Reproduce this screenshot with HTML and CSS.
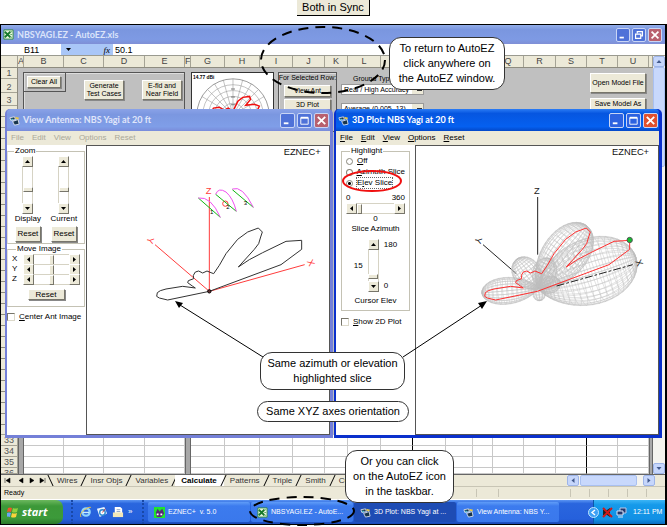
FILE: index.html
```html
<!DOCTYPE html>
<html lang="en">
<head>
<meta charset="utf-8">
<title>Both in Sync</title>
<link rel="stylesheet" href="styles.css">
</head>
<body>
<svg class="defs" aria-hidden="true">
  <symbol id="app" viewBox="0 0 12 12"><path d="M1 3l5-1 1 3-5 1z" fill="#18354d" stroke="#fff" stroke-width=".8"/><path d="M2 4l2 0 1 1-2 1z" fill="#5bc8d8"/><path d="M4 7l6-2 1 5-5 1z" fill="#18354d" stroke="#fff" stroke-width=".8"/><path d="M7 2l4 1-1 2-3-1z" fill="#e8c84a"/></symbol>
  <symbol id="xls" viewBox="0 0 12 12"><path d="M1 1h10v10H1z" fill="#e8f5e0" stroke="#2f8a3c" stroke-width="1"/><path d="M2 3l6 6M8 3L2 9" stroke="#16792b" stroke-width="2"/><path d="M8 3h2M8 6h2M8 9h2" stroke="#5aa85e"/></symbol>
  <symbol id="min" viewBox="0 0 14 14"><path d="M3 10h5" stroke="#fff" stroke-width="2"/></symbol>
  <symbol id="max" viewBox="0 0 14 14"><path d="M3 4h8v7H3z" fill="none" stroke="#fff"/><path d="M3 4h8" stroke="#fff" stroke-width="2"/></symbol>
  <symbol id="restore" viewBox="0 0 14 14"><path d="M5 5V3h6v5H9M3 6h6v5H3z" fill="none" stroke="#fff" stroke-width="1.4"/></symbol>
  <symbol id="close" viewBox="0 0 14 14"><path d="M3 3l8 8M11 3l-8 8" stroke="#fff" stroke-width="2"/></symbol>
  <symbol id="up" viewBox="0 0 9 9"><path d="M2 6h5L4.500 3z"/></symbol>
  <symbol id="down" viewBox="0 0 9 9"><path d="M2 3h5L4.500 6z"/></symbol>
  <symbol id="left" viewBox="0 0 9 9"><path d="M6 2v5L3 4.500z"/></symbol>
  <symbol id="right" viewBox="0 0 9 9"><path d="M3 2v5l3-2.500z"/></symbol>
  <symbol id="pattern" viewBox="-132 112 735 870"><path d="M235 548L110 574 85 568 77 563 79 552 88 546 105 541 155 533 193 538 184 532 170 522 172 516 188 510 187 500 193 490 203 487 215 493 228 487 240 492 248 495 265 470 285 435 320 392 350 370 382 358 394 370 389 385 383 405 370 422 322 475 355 453 395 432 465 398 512 395 512 422 450 468z"/></symbol>
</svg>

<h1 class="caption">Both in Sync</h1>

<main class="desktop">
  <section class="excel">
    <header class="excel-title">
      <svg class="ic"><use href="#xls"/></svg><span class="title-text">NBSYAGI.EZ - AutoEZ.xls</span>
      <div class="win-buttons">
        <button aria-label="Minimize"><svg><use href="#min"/></svg></button>
        <button aria-label="Restore"><svg><use href="#restore"/></svg></button>
        <button class="x" aria-label="Close"><svg><use href="#close"/></svg></button>
      </div>
    </header>
    <div class="formula">
      <input class="cell-name" aria-label="Name box" value="B11">
      <span class="fx"><svg class="tri"><use href="#down"/></svg><i>fx</i></span>
      <input class="cell-value" aria-label="Formula" value="50.1">
    </div>
    <div class="sheet">
      <div class="sheet-main">
        <div class="cols head"><span></span><span>A</span><span>B</span><span>C</span><span>D</span><span>E</span><span>F</span><span>G</span><span>H</span><span>I</span><span>J</span><span>K</span><span>L</span><span></span><span></span><span></span><span></span><span>Q</span><span>R</span><span>S</span><span>T</span><span>U</span><span></span></div>
        <div class="band">
          <div class="row-nums"><span class="r1">1</span><span class="r2">2</span><span class="r3">3</span><span class="rest"></span></div>
          <div class="panel">
            <div class="frame tests">
              <div class="clear"><button class="gray">Clear All</button></div>
              <button class="gray tall">Generate<br>Test Cases</button>
              <button class="gray tall">E-fld and<br>Near Field</button>
            </div>
            <div class="chart">
              <svg viewBox="0 0 83 90"><text x="1" y="6" class="dbi">14.77 dBi</text>
                <g fill="none" stroke="#999" stroke-width=".6"><circle cx="42" cy="43" r="37" stroke="#555"/><circle cx="42" cy="43" r="31"/><circle cx="42" cy="43" r="25"/><circle cx="42" cy="43" r="19"/><circle cx="42" cy="43" r="12"/><path d="M42 6v74M5 43h74M23 11l38 64M61 11L23 75M10 24l64 38M74 24L10 62M32 7l20 72M52 7L32 79M16 17l52 52M68 17L16 69"/></g>
                <g fill="#777"><path d="M40 16h4v1h-4zM40 24h4v1h-4zM40 32h4v1h-4z"/></g>
                <path d="M18 43l4-7 6-1 5 3 4-2 5 3 5-10 5-4 7-1 1 3-5 6 9-1 5 2-3 6-14 5" fill="none" stroke="#f01010" stroke-width="1.500"/>
              </svg>
            </div>
            <div class="frame selected"><span>For Selected Row:</span><button class="gray">View Ant</button><button class="gray">3D Plot</button></div>
            <div class="ground"><label for="gt">Ground Type</label><select id="gt"><option>Real / High Accuracy</option></select><select aria-label="Ground constants"><option>Average (0.005, 13)</option></select></div>
            <div class="files"><button class="gray tall">Open Model File</button><button class="gray">Save Model As</button></div>
          </div>
        </div>
        <div class="cols row"><span>33</span><span></span><span></span><span></span><span></span><span></span><span></span><span></span><span></span><span></span><span></span><span></span><span></span><span></span><span></span><span></span><span></span><span></span><span></span><span></span><span></span><span></span><span></span></div>
        <div class="cols row"><span>34</span><span></span><span></span><span></span><span></span><span></span><span></span><span></span><span></span><span></span><span></span><span></span><span></span><span></span><span></span><span></span><span></span><span></span><span></span><span></span><span></span><span></span><span></span></div>
        <div class="cols row"><span>35</span><span></span><span></span><span></span><span></span><span></span><span></span><span></span><span></span><span></span><span></span><span></span><span></span><span></span><span></span><span></span><span></span><span></span><span></span><span></span><span></span><span></span><span></span></div>
        <div class="cols row last"><span>36</span><span></span><span></span><span></span><span></span><span></span><span></span><span></span><span></span><span></span><span></span><span></span><span></span><span></span><span></span><span></span><span></span><span></span><span></span><span></span><span></span><span></span><span></span></div>
      </div>
      <div class="xp-scroll"><button aria-label="Scroll up"><svg><use href="#up"/></svg></button><div class="xp-thumb"></div><button aria-label="Scroll down"><svg><use href="#down"/></svg></button></div>
    </div>
    <nav class="tabs">
      <div class="tab-nav"><svg viewBox="0 0 42 9"><path d="M2 2v5M7 2v5L3 4.500zM20 2v5l-4-2.500zM27 2v5l4-2.500zM37 2v5l4-2.500zM42 2v5" stroke="#000" stroke-width=".5"/></svg></div>
      <a class="first" href="#">Wires</a><a href="#">Insr Objs</a><a href="#">Variables</a><a class="on" href="#">Calculate</a><a href="#">Patterns</a><a href="#">Triple</a><a href="#">Smith</a><a href="#">Cu</a>
      <div class="xp-scroll h"><button aria-label="Scroll left"><svg><use href="#left"/></svg></button><div class="xp-thumb"></div><button aria-label="Scroll right"><svg><use href="#right"/></svg></button></div>
    </nav>
    <footer class="status"><span class="ready">Ready</span><i class="w"></i><i class="ww"></i><i></i><i></i><i></i><i></i><i></i></footer>
  </section>

  <section class="window view">
    <header class="win-title"><svg class="ic"><use href="#app"/></svg><span class="title-text">View Antenna: NBS Yagi at 20 ft</span>
      <div class="win-buttons">
        <button aria-label="Minimize"><svg><use href="#min"/></svg></button>
        <button aria-label="Maximize"><svg><use href="#max"/></svg></button>
        <button class="x" aria-label="Close"><svg><use href="#close"/></svg></button>
      </div>
    </header>
    <nav class="menu"><a href="#">File</a><a href="#">Edit</a><a href="#">View</a><a href="#">Options</a><a href="#">Reset</a></nav>
    <div class="win-body">
      <div class="side">
        <fieldset class="zoom"><legend>Zoom</legend>
          <div class="col"><div class="scroll v"><button aria-label="Increase display"><svg><use href="#up"/></svg></button><input type="range" id="display" value="34"><button aria-label="Decrease display"><svg><use href="#down"/></svg></button></div><label for="display">Display</label><button class="gray">Reset</button></div>
          <div class="col"><div class="scroll v"><button aria-label="Increase current"><svg><use href="#up"/></svg></button><input type="range" id="current" value="34"><button aria-label="Decrease current"><svg><use href="#down"/></svg></button></div><label for="current">Current</label><button class="gray">Reset</button></div>
        </fieldset>
        <fieldset class="move"><legend>Move Image</legend>
          <div class="axis"><label for="mx">X</label><div class="scroll"><button aria-label="X down"><svg><use href="#left"/></svg></button><input type="range" id="mx"><button aria-label="X up"><svg><use href="#right"/></svg></button></div></div>
          <div class="axis"><label for="my">Y</label><div class="scroll"><button aria-label="Y down"><svg><use href="#left"/></svg></button><input type="range" id="my"><button aria-label="Y up"><svg><use href="#right"/></svg></button></div></div>
          <div class="axis"><label for="mz">Z</label><div class="scroll"><button aria-label="Z down"><svg><use href="#left"/></svg></button><input type="range" id="mz"><button aria-label="Z up"><svg><use href="#right"/></svg></button></div></div>
          <button class="gray">Reset</button>
        </fieldset>
        <label class="check"><input type="checkbox"><span><u>C</u>enter Ant Image</span></label>
      </div>
      <div class="canvas">
        <svg viewBox="-132 112 735 870" preserveAspectRatio="xMinYMin meet" fill="none" stroke-width="3">
          <text x="458" y="140" class="brand">EZNEC+</text>
          <g stroke="#ff3c3c"><path d="M235 265V548L72 408M235 548L521 468"/><circle cx="283" cy="285" r="8"/></g>
          <g class="axis-label red"><text x="224" y="256">Z</text><text x="-9" y="9" transform="translate(57 395) rotate(105)">Y</text><text x="-9" y="9" transform="translate(539 462) rotate(65)">X</text></g>
          <g stroke="#10b810"><path d="M202 268l66 58M254 257l62 51M304 243l63 53"/></g>
          <g stroke="#f050f0"><path d="M202 268Q240 262 268 326M254 257Q262 235 285 250 306 268 316 308M304 241Q334 229 367 296"/></g>
          <g class="num"><text x="237" y="316">1</text><text x="286" y="302">2</text><text x="338" y="290">3</text></g>
          <use href="#pattern" x="-132" y="112" width="735" height="870" stroke="#333"/>
          <circle cx="235" cy="548" r="5" stroke="#000" fill="#633"/>
        </svg>
      </div>
    </div>
  </section>

  <section class="window plot">
    <header class="win-title"><svg class="ic"><use href="#app"/></svg><span class="title-text">3D Plot: NBS Yagi at 20 ft</span>
      <div class="win-buttons">
        <button aria-label="Minimize"><svg><use href="#min"/></svg></button>
        <button aria-label="Maximize"><svg><use href="#max"/></svg></button>
        <button class="x" aria-label="Close"><svg><use href="#close"/></svg></button>
      </div>
    </header>
    <nav class="menu"><a href="#"><u>F</u>ile</a><a href="#"><u>E</u>dit</a><a href="#"><u>V</u>iew</a><a href="#"><u>O</u>ptions</a><a href="#"><u>R</u>eset</a></nav>
    <div class="win-body">
      <div class="side">
        <fieldset class="highlight"><legend>Highlight</legend>
          <label class="radio"><input type="radio" name="hl"><span><u>O</u>ff</span></label>
          <label class="radio"><input type="radio" name="hl"><span><u>A</u>zimuth Slice</span></label>
          <label class="radio focus"><input type="radio" name="hl" checked><span>E<u>l</u>ev Slice</span></label>
          <div class="ends"><span>0</span><span>360</span></div>
          <div class="scroll"><button aria-label="Azimuth down"><svg><use href="#left"/></svg></button><input type="range" id="az" value="0"><button aria-label="Azimuth up"><svg><use href="#right"/></svg></button></div>
          <output for="az">0</output>
          <label for="az" class="name">Slice Azimuth</label>
          <div class="elev"><output for="el">15</output><div class="scroll v"><button aria-label="Elevation up"><svg><use href="#up"/></svg></button><input type="range" id="el" value="8"><button aria-label="Elevation down"><svg><use href="#down"/></svg></button></div><div class="limits"><span>180</span><span>0</span></div></div>
          <label for="el" class="name">Cursor Elev</label>
        </fieldset>
        <label class="check"><input type="checkbox"><span><u>S</u>how 2D Plot</span></label>
      </div>
      <div class="canvas">
        <svg viewBox="-132 112 735 870" preserveAspectRatio="xMinYMin meet" fill="none" stroke-width="3">
          <text x="456" y="140" class="brand">EZNEC+</text>
          <path d="M233 265V438M69 408l100 87" stroke="#222"/>
          <g id="mesh"></g>
          <path d="M290 532L518 468" stroke="#222" stroke-dasharray="24 6 8 6"/>
          <g class="axis-label"><text x="222" y="256">Z</text><text x="-9" y="9" transform="translate(54 395) rotate(105)">Y</text><text x="-9" y="9" transform="translate(537 462) rotate(65)">X</text></g>
          <use href="#pattern" x="-135" y="112" width="735" height="870" stroke="#ff3030"/>
          <circle cx="509" cy="394" r="8" fill="#10c030" stroke="#555"/>
        </svg>
      </div>
    </div>
  </section>

  <footer class="taskbar">
    <button class="start"><svg viewBox="0 0 12 12"><path d="M1 2q2-1 4 0l-1 4q-2-1-4 0z" fill="#f0562a"/><path d="M6 2q2 1 5 0l-1 4q-3 1-5 0z" fill="#8fd13f"/><path d="M0 7q2-1 4 0l-1 4q-2-1-4 0z" fill="#6aa5f5"/><path d="M5 7q2 1 5 0l-1 4q-3 1-5 0z" fill="#fbd33c"/></svg>start</button>
    <div class="quick">
      <svg viewBox="0 0 13 13"><circle cx="6.500" cy="6.500" r="4" fill="none" stroke="#8fd4ff" stroke-width="2.500"/><path d="M3 7h7" stroke="#c8ecff" stroke-width="1.500"/><path d="M1 12Q-1 8 5 4t7-2" fill="none" stroke="#f5c842"/></svg>
      <svg viewBox="0 0 13 13"><path d="M1 3l8-2 3 7-8 4z" fill="#e8f4ff"/><circle cx="7" cy="7" r="3" fill="#fff" stroke="#2f8ad0" stroke-width="1.500"/><path d="M7 7l3-4" stroke="#c33"/></svg>
      <svg viewBox="0 0 13 13"><path d="M3 1h6l2 2v6H3z" fill="#fff"/><path d="M1 7h11v5H1z" fill="#f2e7b8"/><path d="M5 4h4M5 6h4" stroke="#8aa0c0"/></svg>
      <span>»</span>
    </div>
    <div class="tasks">
      <button><svg class="ic" viewBox="0 0 12 12"><path d="M0 0h12v12H0z" fill="#1ee52c"/><path d="M2 6l2-4 2 3 3-3 2 5-3 4H3z" fill="#5a2a78"/><path d="M3 7h2v2H3zM7 7h2v2H7z" fill="#fff"/></svg>EZNEC+&nbsp; v. 5.0</button>
      <button><svg class="ic"><use href="#xls"/></svg>NBSYAGI.EZ - AutoE...</button>
      <button class="on"><svg class="ic"><use href="#app"/></svg>3D Plot: NBS Yagi at ...</button>
      <button><svg class="ic"><use href="#app"/></svg>View Antenna: NBS Y...</button>
    </div>
    <div class="tray">
      <svg viewBox="0 0 11 11"><circle cx="5.500" cy="5.500" r="5" fill="#3da0f5" stroke="#bfe4ff"/><path d="M7 3L4 5.500 7 8" fill="none" stroke="#fff" stroke-width="1.400"/></svg>
      <svg viewBox="0 0 11 11"><path d="M1 3h4l3-2v9L5 8H1z" fill="#222"/><path d="M1 1l9 9M10 1l-9 9" stroke="#d01818" stroke-width="2"/></svg>
      <svg viewBox="0 0 11 11"><path d="M4 1h6v5H4z" fill="#24386e" stroke="#b8c8e8"/><path d="M1 4h6v4H1z" fill="#24386e" stroke="#dce6f8"/><path d="M2 10h5" stroke="#dce6f8"/></svg>
      <time>12:11 PM</time>
    </div>
  </footer>
</main>

<svg class="marks" viewBox="0 0 667 527" aria-hidden="true">
  <g fill="none" stroke="#000" stroke-width="2" stroke-dasharray="10 7"><ellipse cx="323" cy="60" rx="62" ry="33"/><ellipse cx="302" cy="511" rx="52" ry="14"/></g>
  <ellipse cx="372" cy="181" rx="29" ry="10" fill="none" stroke="#f01010" stroke-width="2"/>
  <path d="M263 357L180 305M403 357L482 305" stroke="#000" fill="none"/>
  <path d="M175 301l8 2-4 5zM487 301l-5 8-4-6z"/>
</svg>
<p class="note n1">To return to AutoEZ<br>click anywhere on<br>the AutoEZ window.</p>
<p class="note n2">Same azimuth or elevation<br>highlighted slice</p>
<p class="note n3">Same XYZ axes orientation</p>
<p class="note n4">Or you can click<br>on the AutoEZ icon<br>in the taskbar.</p>
<script src="script.js"></script>
</body>
</html>
```
FILE: styles.css
```css
* { box-sizing: border-box; }
body {
  margin: 0;
  min-height: 100vh;
  position: relative;
  display: flex;
  flex-direction: column;
  align-items: center;
  background: #fff;
  color: #000;
  font: 8px/10px "Liberation Sans", Arial, sans-serif;
}
button, input, select { font: inherit; color: inherit; margin: 0; padding: 0; border: 0; border-radius: 0; min-width: 0; }
fieldset { margin: 0; padding: 0; min-width: 0; border: 1px solid #c4c2b4; }
legend { margin-left: 4px; padding: 0 1px; }
a { color: inherit; text-decoration: none; }
svg { display: block; }
.defs { position: absolute; width: 0; height: 0; }
.ic { width: 11px; height: 11px; flex: none; }

.caption {
  margin: 0 0 8px;
  height: 16px;
  padding: 0 5px;
  background: #ece9d8;
  border-right: 1px solid #000;
  border-bottom: 1px solid #000;
  font-size: 11px;
  line-height: 15px;
  font-weight: normal;
}
.desktop {
  position: relative;
  align-self: stretch;
  flex: 1;
  display: flex;
  flex-direction: column;
  margin-bottom: 2px;
  border: 1px solid #000;
  border-width: 1px 2px 1px 1px;
}

/* spreadsheet window */
.excel { flex: 1; display: flex; flex-direction: column; }
.excel-title {
  display: flex;
  align-items: center;
  gap: 3px;
  height: 19px;
  padding: 0 3px 0 2px;
  background: linear-gradient(#93aeea, #7a96df 25%, #7e9ae4 75%, #7f8fd6);
  color: #dbe4fa;
}
.title-text { font: bold 9px/12px Lato, sans-serif; white-space: nowrap; }
.win-buttons { display: flex; gap: 2px; margin-left: auto; }
.win-buttons button { width: 14px; height: 14px; border: 1px solid #c9d5f5; border-radius: 2px; background: #4f72d8; }
.win-buttons svg { width: 12px; height: 12px; }
.win-buttons .x { background: #b8606e; }
.formula { display: flex; height: 12px; background: #fff; border-bottom: 1px solid #9a9a90; font-size: 9px; }
.cell-name { width: 60px; padding-left: 23px; background: #fff; }
.fx { display: flex; align-items: center; justify-content: space-between; width: 52px; padding: 0 3px; background: #a9c6f7; font-family: "Liberation Serif", serif; }
.tri { width: 9px; height: 9px; }
.cell-value { flex: 1; padding-left: 2px; background: #fff; }
.sheet { flex: 1; display: flex; min-height: 0; }
.sheet-main { flex: 1; display: flex; flex-direction: column; background: #fff; }
.cols { display: grid; grid-template-columns: 17fr 6fr 40fr 40fr 41fr 40fr 6fr 34fr 35fr 33fr 32fr 23fr 33fr 32fr 33fr 27fr 20fr 31fr 32fr 31fr 31fr 31fr 4fr; }
.cols span { min-width: 0; overflow: hidden; }
.head { height: 12px; background: #ece9d8; border-bottom: 1px solid #8e8c80; font-size: 9px; color: #444; text-align: center; }
.head span { border-right: 1px solid #a5a395; }
.row { height: 11px; }
.row span { border-right: 1px solid #c8c8c8; border-bottom: 1px solid #c8c8c8; }
.row span:first-child { background: #ece9d8; font-size: 9px; color: #555; text-align: center; border-color: #a5a395; }
.row span:nth-child(2), .row span:nth-child(7), .row span:last-child { background: #a8a8a8; border: 1px solid #666; border-width: 0 1px; }
.row span:nth-child(14), .row span:nth-child(20) { border-right-color: #000; }
.last { height: 6px; overflow: hidden; }
.band { flex: 1; display: flex; min-height: 0; }
.row-nums { width: 17px; display: flex; flex-direction: column; background: #ece9d8; border-right: 1px solid #8e8c80; font-size: 9px; color: #555; text-align: center; }
.row-nums span { display: flex; align-items: end; justify-content: center; border-bottom: 1px solid #a5a395; }
.r1 { height: 11px; }
.r2 { height: 14px; }
.r3 { height: 13px; }
.rest { flex: 1; background: repeating-linear-gradient(#ece9d8 0 10px, #8e8c80 10px 11px); }
.panel { flex: 1; display: flex; align-items: flex-start; padding: 4px 7px 0 5px; background: #c0c0c0; }
.frame { border: 1px solid #555; height: 60px; box-shadow: inset 1px 1px #ddd; }
.gray {
  background: #ece9d8;
  border: 1px solid;
  border-color: #fff #77756a #77756a #fff;
  box-shadow: 1px 1px #888;
  line-height: 8px;
  white-space: nowrap;
}
.gray, .panel select { font-size: 7px; }
.tests { display: flex; gap: 18px; width: 162px; }
.tests .tall { margin-top: 7px; width: 40px; height: 20px; }
.clear { width: 42px; height: 19px; padding: 3px; border: 1px solid #555; border-width: 0 1px 1px 0; }
.clear .gray { width: 34px; height: 12px; }
.chart { width: 83px; height: 60px; margin: 0 4px 0 6px; background: #fff; border: 1px solid #333; overflow: hidden; }
.chart svg { width: 100%; }
.dbi { font: bold 5px "Liberation Sans", sans-serif; }
.selected { display: flex; flex-direction: column; align-items: center; gap: 2px; width: 59px; font-size: 7px; white-space: nowrap; }
.selected .gray { width: 47px; height: 12px; }
.ground { display: flex; flex-direction: column; width: 83px; margin: 2px 0 0 4px; font-size: 7px; }
.ground label { margin-left: 12px; }
.ground select { appearance: none; width: 83px; height: 11px; margin-bottom: 8px; padding-left: 2px; border: 1px solid #999; background: conic-gradient(#333 0 0) 75px 4px / 5px 2px no-repeat, linear-gradient(#ece9d8 0 0) right / 11px 100% no-repeat #fff; }
.files { display: flex; flex-direction: column; gap: 5px; margin: 1px 0 0 auto; }
.files .gray { width: 56px; height: 12px; }
.files .tall { height: 20px; }

.xp-scroll { width: 12px; display: flex; flex-direction: column; background: #f4f3ee; }
.xp-scroll button { width: 12px; height: 11px; border: 1px solid #9db4e8; border-radius: 2px; background: #c6d6fb; }
.xp-scroll button svg { width: 10px; height: 9px; fill: #42598c; }
.xp-scroll .xp-thumb { height: 100px; margin-bottom: auto; border: 1px solid #a9c0f0; border-radius: 2px; background: #c8d8fc; }
.xp-scroll.h { flex-direction: row; width: 88px; height: 11px; margin: 0 10px 0 auto; }
.xp-scroll.h .xp-thumb { width: 57px; height: 11px; margin: 0 auto 0 1px; }

.tabs { display: flex; align-items: center; height: 12px; overflow: hidden; background: #ece9d8; border-top: 1px solid #666; }
.tab-nav { width: 46px; padding-left: 2px; }
.tab-nav svg { width: 42px; height: 9px; overflow: visible; }
.tabs a { position: relative; padding: 0 7px 0 6px; line-height: 11px; color: #333; }
.tabs a::after { content: ""; position: absolute; right: 0; top: 0; height: 11px; border-right: 1px solid #000; transform: skewX(-25deg); }
.tabs a.first { margin-left: 4px; }
.tabs a.first::before { content: ""; position: absolute; left: -1px; top: 0; height: 11px; border-left: 1px solid #000; transform: skewX(25deg); }
.tabs a.on { background: #fff; color: #000; font-weight: bold; }
.status { display: flex; height: 14px; align-items: center; background: #ece9d8; border-top: 1px solid #c8c5b5; border-bottom: 1px solid #fff; font-size: 7px; }
.ready { margin: 0 auto 0 3px; }
.status i { width: 19px; height: 8px; border-left: 1px solid #c8c5b5; }
.status .w { width: 22px; }
.status .ww { width: 72px; }

/* tool windows */
.window {
  position: absolute;
  top: 84px;
  bottom: 86px;
  width: 328px;
  display: flex;
  flex-direction: column;
  border: 1px solid;
  border-width: 0 3px 3px 2px;
  border-radius: 5px 5px 0 0;
}
.view { left: 4px; border-color: #7480d8; background: #7480d8; }
.plot { left: 333px; border-color: #0a30cc; background: #0a30cc; }
.win-title { display: flex; align-items: center; gap: 3px; height: 22px; flex: none; padding: 0 1px 0 2px; }
.view .win-title { background: linear-gradient(#8aa2e8, #7b97e0 25%, #7f9ee8 80%, #7a8cda); color: #e0e6fa; border-radius: 4px 4px 0 0; }
.plot .win-title { background: linear-gradient(#2b7cf5, #0656e0 20%, #0560f0 80%, #0348c8); color: #fff; border-radius: 4px 4px 0 0; }
.plot .win-buttons button { background: #2d62e0; }
.plot .win-buttons .x { background: #e0502e; }
.win-title .win-buttons button { width: 15px; height: 15px; }
.win-title .win-buttons svg { width: 13px; height: 13px; }
.menu { display: flex; gap: 8px; height: 14px; flex: none; padding: 2px 4px; background: #ece9d8; }
.view .menu { color: #aaa899; }
.win-body { flex: 1; display: flex; background: #fff; min-height: 0; }
.side { width: 79px; flex: none; padding: 1px 1px 0 0; font-family: "Liberation Sans Narrow", "Liberation Sans", sans-serif; }
.canvas { flex: 1; min-width: 0; overflow: hidden; border: 1px solid #555; }
.canvas svg { width: 245px; height: 290px; }
.brand { font: 28px "Liberation Sans", sans-serif; fill: #111; }
.axis-label { font: 28px "Liberation Sans", sans-serif; fill: #222; }
.axis-label.red { fill: #ff3c3c; }
.num { font: 18px "Liberation Sans", sans-serif; fill: #000; }

.scroll { display: flex; height: 11px; background: #f6f5f0; }
.scroll button { width: 11px; height: 11px; flex: none; background: #ece9d8; border: 1px solid; border-color: #fff #77756a #77756a #fff; }
.scroll button svg { width: 9px; height: 9px; }
.scroll input { appearance: none; flex: 1; width: 20px; height: 11px; background: #fff; border: 1px solid #d6d3c4; border-width: 1px 0; }
.scroll input::-webkit-slider-thumb { appearance: none; width: 5px; height: 10px; background: #ece9d8; border: 1px solid; border-color: #fff #77756a #77756a #fff; }
.scroll.v { flex-direction: column; width: 11px; height: 58px; }
.scroll.v input { writing-mode: vertical-lr; direction: rtl; width: 11px; height: 20px; border-width: 0 1px; }
.scroll.v input::-webkit-slider-thumb { width: 10px; height: 5px; }

.zoom { display: flex; justify-content: space-around; height: 98px; padding: 0 2px; }
.zoom, .move { border-left-color: #e0ded2; }
.col { display: flex; flex-direction: column; align-items: center; }
.col .gray { width: 26px; height: 16px; margin-top: 2px; }
.side .gray { font-size: 8px; }
.move { height: 63px; padding: 0 4px; display: flex; flex-direction: column; }
.axis { display: flex; justify-content: space-between; height: 10px; font-family: "Liberation Sans", sans-serif; }
.axis .scroll { width: 57px; }
.move > .gray { align-self: center; width: 37px; height: 11px; margin-top: 5px; }
.check { display: flex; align-items: center; gap: 4px; margin-top: 5px; white-space: nowrap; }
.check input { appearance: none; width: 8px; height: 8px; background: #fff; border: 1px solid; border-color: #77756a #dcd9ca #dcd9ca #77756a; }

.highlight { display: flex; flex-direction: column; width: 69px; height: 165px; margin-left: 5px; padding: 0 4px; }
.plot .check { margin-left: 5px; margin-top: 6px; }
.radio { display: flex; align-items: center; gap: 4px; height: 10px; margin-bottom: 1px; white-space: nowrap; }
.radio input { appearance: none; width: 7px; height: 7px; border: 1px solid #88867a; border-radius: 50%; background: #fff; }
.radio input:checked { background: radial-gradient(#000 0 1px, #fff 2px); }
.focus span { outline: 1px dotted #666; }
.ends { display: flex; justify-content: space-between; margin-top: 4px; }
.highlight output, .highlight .name { text-align: center; }
.elev { display: flex; justify-content: center; align-items: center; gap: 5px; margin: 5px 0 4px; }
.elev .scroll { height: 53px; }
.elev .limits { display: flex; flex-direction: column; justify-content: space-between; height: 51px; }

/* taskbar */
.taskbar { display: flex; height: 24px; background: linear-gradient(#5a94f2, #2a66de 15%, #2560dc 80%, #1b49b5); color: #fff; }
.start { display: flex; align-items: center; gap: 3px; width: 62px; padding-left: 6px; background: linear-gradient(#6cb85e, #3c9838 25%, #3c9a3a 75%, #2b7a2b); border-radius: 0 7px 7px 0; font: italic bold 11px/16px "Open Sans", sans-serif; }
.start svg { width: 12px; height: 12px; }
.quick { display: flex; align-items: center; gap: 4px; width: 73px; margin: 0 4px 0 8px; padding-left: 7px; border: 1px dotted #1848a8; border-width: 0 2px; }
.quick svg { width: 12px; height: 12px; }
.tasks { flex: 1; display: flex; gap: 1px; padding: 2px 0; }
.tasks button { flex: 0 1 102px; display: flex; align-items: center; gap: 3px; padding-left: 6px; border-radius: 2px; background: linear-gradient(#5f9cf8, #3c7bee 20%, #3a78ec); white-space: nowrap; font-size: 7px; overflow: hidden; }
.tasks .on { background: #1e4cb4; }
.tray { display: flex; align-items: center; gap: 3px; width: 72px; background: linear-gradient(#3cb4f5, #159aea 20%, #1290e4 80%, #0c6cc0); border-left: 1px solid #0c58a8; font-size: 7px; }
.tray svg { width: 11px; height: 11px; flex: none; }
.tray svg:first-child { margin-left: -6px; }
.tray time { margin-left: 3px; white-space: nowrap; }

/* annotations */
.marks { position: absolute; left: 0; top: 0; width: 667px; height: 527px; pointer-events: none; }
.note { position: absolute; margin: 0; padding: 3px 5px; background: #fff; border: 1px solid #333; border-radius: 12px; font-size: 11px; line-height: 15px; text-align: center; white-space: nowrap; }
.n1 { left: 389px; top: 37px; width: 116px; }
.n2 { left: 260px; top: 352px; width: 145px; }
.n3 { left: 257px; top: 401px; width: 152px; padding: 2px; }
.n4 { left: 345px; top: 450px; width: 109px; }
```
FILE: script.js
```js
// Wire-frame far-field lobes: each is a cos^n pattern revolved about its axis.
const origin = [235, 538];
const lobes = [
  { tip: [527, 446], n: 3, rings: 26, spokes: 34 },
  { tip: [380, 352], n: 4, rings: 28, spokes: 34 },
  { tip: [66, 553], n: 6, rings: 24, spokes: 24 },
  { tip: [170, 452], n: 2, rings: 16, spokes: 22 },
  { tip: [270, 450], n: 2, rings: 12, spokes: 16 },
  { tip: [300, 520], n: 2, rings: 12, spokes: 18 },
  { tip: [240, 576], n: 1, rings: 6, spokes: 12 }
];
function lobePath({ tip, n, rings, spokes }) {
  const dx = tip[0] - origin[0], dy = tip[1] - origin[1];
  const len = Math.hypot(dx, dy), ax = dx / len, ay = dy / len;
  const point = (t, p) => {
    const r = len * Math.cos(t) ** n;
    const along = r * (Math.cos(t) + 0.15 * Math.sin(t) * Math.sin(p));
    const across = r * Math.sin(t) * Math.cos(p);
    return (origin[0] + ax * along - ay * across).toFixed(1) + " " + (origin[1] + ay * along + ax * across).toFixed(1);
  };
  let d = "";
  for (let i = 1; i < rings; i++) {
    const t = (i / rings) * 1.3, ring = [];
    for (let j = 0; j <= spokes; j++) ring.push(point(t, (j / spokes) * 2 * Math.PI));
    d += "M" + ring.join("L");
  }
  for (let j = 0; j < spokes; j++) {
    const spoke = [];
    for (let i = 0; i <= rings; i++) spoke.push(point((i / rings) * 1.3, (j / spokes) * 2 * Math.PI));
    d += "M" + spoke.join("L");
  }
  return d;
}
const mesh = document.getElementById("mesh");
for (const lobe of lobes) {
  const path = document.createElementNS("http://www.w3.org/2000/svg", "path");
  path.setAttribute("d", lobePath(lobe));
  path.setAttribute("stroke", "#bdbdbd");
  path.setAttribute("stroke-width", "1.3");
  mesh.appendChild(path);
}
```
